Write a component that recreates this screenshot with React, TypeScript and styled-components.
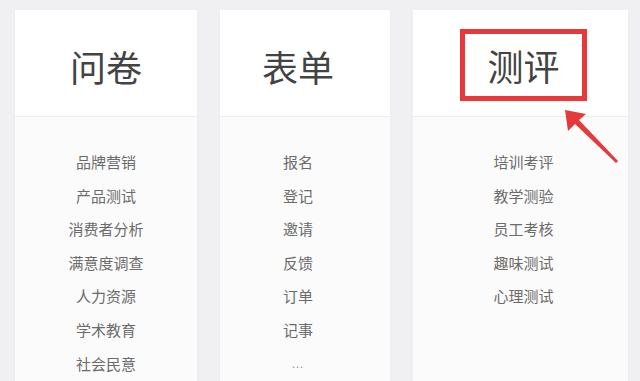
import styled, { createGlobalStyle } from "styled-components";

// data
interface ICategory {
  title: string;
  items: string[];
  more?: boolean;
  highlight?: boolean;
  width: number;
  shift: number;
}

const categories: ICategory[] = [
  {
    title: "问卷",
    items: ["品牌营销", "产品测试", "消费者分析", "满意度调查", "人力资源", "学术教育", "社会民意"],
    width: 182,
    shift: 0,
  },
  {
    title: "表单",
    items: ["报名", "登记", "邀请", "反馈", "订单", "记事"],
    more: true,
    width: 170,
    shift: -7,
  },
  {
    title: "测评",
    items: ["培训考评", "教学测验", "员工考核", "趣味测试", "心理测试"],
    highlight: true,
    width: 215,
    shift: 3,
  },
];

// shift content off the card centre by padding one side
const sidePad = (shift: number): string =>
  shift < 0 ? `0 ${-shift * 2}px 0 0` : `0 0 0 ${shift * 2}px`;

// styled
const GlobalStyle = createGlobalStyle`
  html, body {
    margin: 0;
    padding: 0;
    background: #f0f0f2;
    overflow: hidden;
  }
  body {
    font-family: "Noto Sans CJK SC", "Noto Sans", sans-serif;
  }
`;

const Page = styled.div`
  display: flex;
  align-items: flex-start;
  gap: 23px;
  height: 381px;
  padding: 10px 0 0 15px;
  box-sizing: border-box;
  overflow: hidden;
`;

const Card = styled.section<{ $width: number }>`
  position: relative;
  flex: 0 0 ${({ $width }) => $width}px;
  height: 400px;
  background: #fbfbfc;
  border-radius: 2px;
  box-shadow: 0 0 3px rgba(0, 0, 0, 0.03);
`;

const Head = styled.div<{ $shift: number }>`
  display: flex;
  justify-content: center;
  align-items: center;
  height: 106px;
  box-sizing: content-box;
  background: #fff;
  border-bottom: 1px solid #ececef;
  padding: ${({ $shift }) => sidePad($shift)};
`;

const Title = styled.h2<{ $highlight?: boolean }>`
  margin: 0;
  font-size: 36px;
  font-weight: 400;
  line-height: 40px;
  color: #434343;
  padding: ${({ $highlight }) => ($highlight ? "11px 22px" : "0")};
  border: ${({ $highlight }) => ($highlight ? "5px solid #e8393a" : "none")};
  transform: translateY(${({ $highlight }) => ($highlight ? "2px" : "3px")});
`;

const List = styled.ul<{ $shift: number }>`
  list-style: none;
  margin: 0;
  padding: 28px 0 0;
  display: flex;
  flex-direction: column;
  align-items: center;
  transform: translateX(${({ $shift }) => $shift}px);
`;

const Item = styled.li`
  font-size: 15px;
  line-height: 33.6px;
  color: #6b6b6b;
`;

const More = styled.li`
  font-size: 11px;
  line-height: 33.6px;
  color: #999;
  letter-spacing: 1px;
`;

const Arrow = styled.svg`
  position: absolute;
  left: 140px;
  top: 90px;
  width: 80px;
  height: 80px;
`;

function App(): JSX.Element {
  return (
    <>
      <GlobalStyle />
      <Page>
        {categories.map((cat) => (
          <Card key={cat.title} $width={cat.width}>
            <Head $shift={cat.shift}>
              <Title $highlight={cat.highlight}>{cat.title}</Title>
            </Head>
            <List $shift={cat.shift}>
              {cat.items.map((item) => (
                <Item key={item}>{item}</Item>
              ))}
              {cat.more && <More>...</More>}
            </List>
            {cat.highlight && (
              <Arrow viewBox="0 0 80 80">
                <polygon points="12,10 33,14 26,20 65,61 63,63 22,24 15,31" fill="#e53a3a" />
              </Arrow>
            )}
          </Card>
        ))}
      </Page>
    </>
  );
}

export default App;
